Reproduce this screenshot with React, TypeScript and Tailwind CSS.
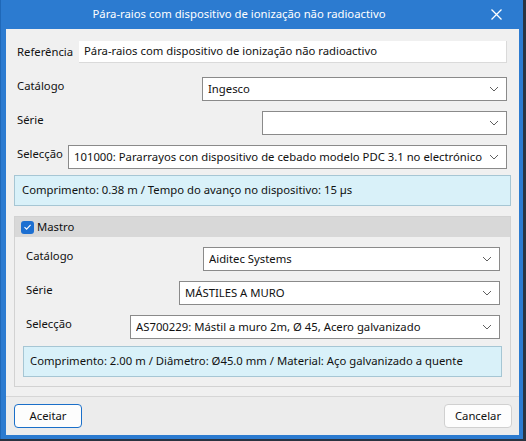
import React from "react";

const Chevron = () => (
  <svg width="10" height="6" viewBox="0 0 10 6" className="shrink-0">
    <path d="M1 1 L5 5 L9 1" fill="none" stroke="#606060" strokeWidth="1" />
  </svg>
);

function Select({ text, className }: { text: string; className: string }) {
  return (
    <div
      className={`h-[24px] bg-white border border-[#8a8a8a] flex items-center pl-[5px] pr-[7px] ${className}`}
    >
      <span className="flex-1 whitespace-nowrap overflow-hidden">{text}</span>
      <Chevron />
    </div>
  );
}

function Row({
  label,
  text,
  selectClass,
}: {
  label: string;
  text: string;
  selectClass: string;
}) {
  return (
    <div className="flex items-start justify-between">
      <span className="leading-[16px] pt-[1px]">{label}</span>
      <Select text={text} className={selectClass} />
    </div>
  );
}

export default function App() {
  return (
    <div className="w-[526px] h-[441px] bg-[#2a3340] font-['Noto_Sans',sans-serif] text-[11.3px] text-[#111]">
      <div className="w-[523px] h-[439px] bg-[#2c7bd0] flex flex-col pl-[5px] pr-[4px] pb-[4px] border-l border-[#1f68b8]">
        {/* Title bar */}
        <div className="h-[29px] flex items-center -ml-[5px] -mr-[4px]">
          <div className="w-[476px] text-center text-white">
            Pára-raios com dispositivo de ionização não radioactivo
          </div>
          <div className="flex-1 pl-[14px] flex items-center">
            <svg width="11" height="11" viewBox="0 0 11 11">
              <path d="M0.5 0.5 L10.5 10.5 M10.5 0.5 L0.5 10.5" stroke="white" strokeWidth="1.3" />
            </svg>
          </div>
        </div>

        {/* Content */}
        <div className="flex-1 bg-[#f0f0f0] flex flex-col">
          <div className="flex flex-col px-[8px] pt-[12px]">
            {/* Referência */}
            <div className="flex items-center pl-[3px] pr-[4px]">
              <span className="w-[62px] shrink-0">Referência</span>
              <div className="flex-1 h-[22px] bg-white border-b border-r border-[#dadada] flex items-center pl-[5px]">
                Pára-raios com dispositivo de ionização não radioactivo
              </div>
            </div>

            <div className="flex flex-col gap-[10px] mt-[14px] pl-[3px] pr-[4px]">
              <Row label="Catálogo" text="Ingesco" selectClass="w-[305px]" />
              <Row label="Série" text="" selectClass="w-[245px]" />
              <Row
                label="Selecção"
                text="101000: Pararrayos con dispositivo de cebado modelo PDC 3.1 no electrónico"
                selectClass="w-[439px]"
              />
            </div>

            <div className="mt-[6px] h-[31px] bg-[#d9f1f9] border border-[#a6c6d4] flex items-center pl-[7px]">
              Comprimento: 0.38 m / Tempo do avanço no dispositivo: 15 µs
            </div>

            {/* Group */}
            <div className="mt-[10px] h-[171px] border border-[#d2d2d2] flex flex-col">
              <div className="h-[20px] bg-[#d8d8d8] flex items-center pl-[6px] gap-[3px]">
                <div className="w-[13px] h-[13px] rounded-[3px] bg-[#1c6fd1] flex items-center justify-center">
                  <svg width="9" height="8" viewBox="0 0 9 8">
                    <path d="M1.5 4.2 L3.6 6.2 L7.6 1.8" fill="none" stroke="white" strokeWidth="1.1" />
                  </svg>
                </div>
                <span>Mastro</span>
              </div>
              <div className="flex flex-col px-[8px] pt-[10px]">
                <div className="flex flex-col gap-[10px] pl-[3px] pr-[2px]">
                  <Row label="Catálogo" text="Aiditec Systems" selectClass="w-[297px]" />
                  <Row label="Série" text="MÁSTILES A MURO" selectClass="w-[321px]" />
                  <Row
                    label="Selecção"
                    text="AS700229: Mástil a muro 2m, Ø 45, Acero galvanizado"
                    selectClass="w-[370px]"
                  />
                </div>
                <div className="mt-[7px] h-[31px] bg-[#d9f1f9] border border-[#a6c6d4] flex items-center pl-[6px]">
                  Comprimento: 2.00 m / Diâmetro: Ø45.0 mm / Material: Aço galvanizado a quente
                </div>
              </div>
            </div>
          </div>

          {/* Footer */}
          <div className="mt-[9px] flex-1 border-t border-[#d6d6d6] bg-[#ececec] flex items-start justify-between pl-[8px] pr-[7px] pt-[7px]">
            <button className="w-[68px] h-[24px] bg-[#fdfdfd] border border-[#1a6fc9] rounded-[4px] flex items-center justify-center">
              Aceitar
            </button>
            <button className="w-[68px] h-[24px] bg-[#fdfdfd] border border-[#d0d0d0] rounded-[4px] flex items-center justify-center">
              Cancelar
            </button>
          </div>
        </div>
      </div>
    </div>
  );
}
